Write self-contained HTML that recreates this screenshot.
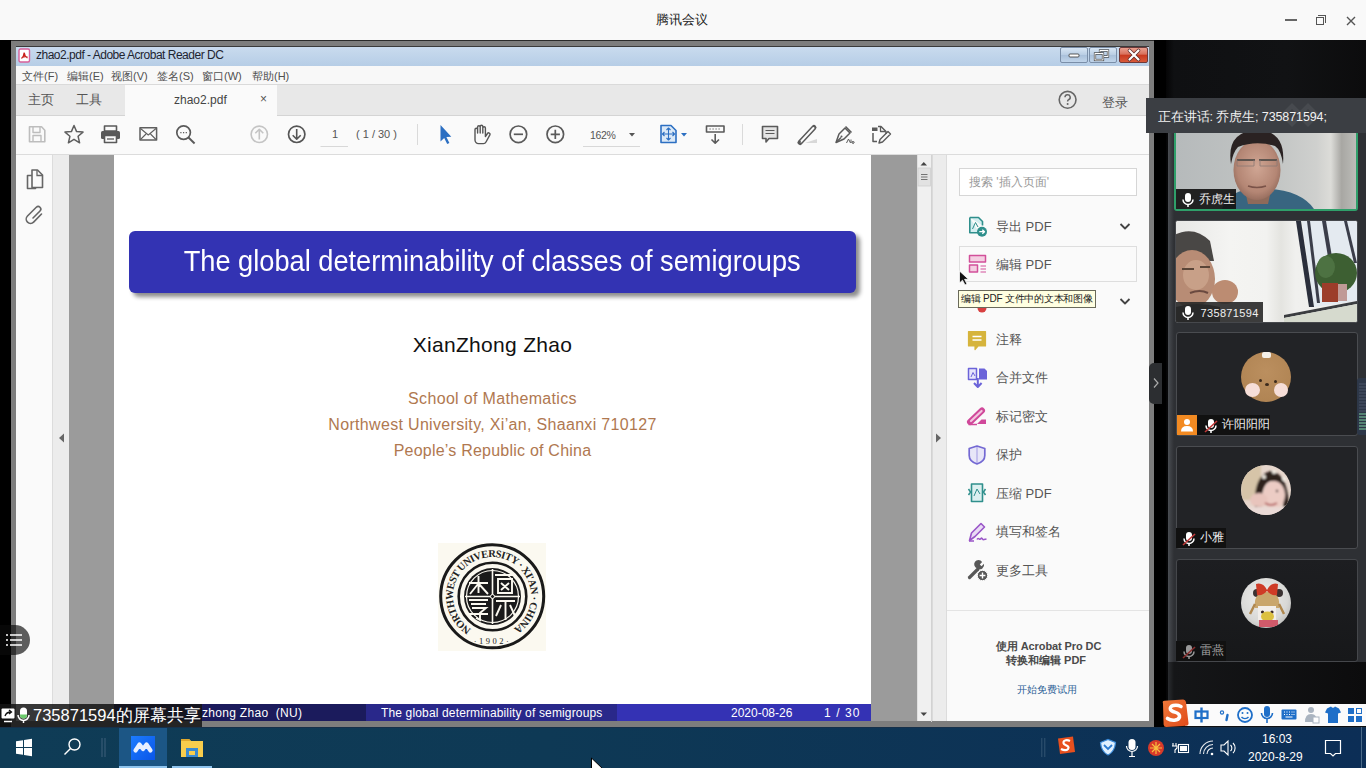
<!DOCTYPE html>
<html><head><meta charset="utf-8">
<style>
*{margin:0;padding:0;box-sizing:border-box}
html,body{width:1366px;height:768px;overflow:hidden;background:#000;font-family:"Liberation Sans",sans-serif;position:relative}
.a{position:absolute}
.t{position:absolute;white-space:nowrap;line-height:1}
</style></head><body>

<!-- Tencent meeting top bar -->
<div class="a" style="left:0;top:0;width:1366px;height:40px;background:#f9f9f9"></div>
<div class="t" style="left:656px;top:13px;font-size:13px;color:#222">腾讯会议</div>
<div class="a" style="left:1285px;top:19px;width:12px;height:2px;background:#666"></div>
<div class="a" style="left:1316px;top:17px;width:8px;height:8px;border:1.5px solid #555"></div>
<div class="a" style="left:1318px;top:15px;width:8px;height:8px;border-top:1.5px solid #555;border-right:1.5px solid #555"></div>
<svg class="a" style="left:1346px;top:16px" width="10" height="10"><path d="M1 1L9 9M9 1L1 9" stroke="#555" stroke-width="1.4"/></svg>

<!-- Acrobat window frame -->
<div class="a" style="left:11px;top:40px;width:1143px;height:687px;background:#7d7d7d;border-top:1px solid #2a2a2a"></div>
<!-- title bar -->
<div class="a" style="left:16px;top:46px;width:1133px;height:20px;background:linear-gradient(#c9dbee,#b6cde6);border-top:1px solid #3a3a3a"></div>
<svg class="a" style="left:18px;top:48px" width="13" height="15"><rect x="1" y="1" width="10.5" height="13" rx="1.5" fill="#fff" stroke="#d8609a" stroke-width="1.4"/><path d="M3.5 10.5C5 9 6 7 6.2 4.5C6.5 7 7.5 9 9.5 10M4 9.5C6 8.5 8 8.5 9.5 9" stroke="#c8201a" stroke-width="1.2" fill="none"/></svg>
<div class="a" style="left:1060px;top:47px;width:28px;height:16px;border:1px solid #7a8ea8;border-radius:2px;background:linear-gradient(#d8e6f4,#b8cde4 50%,#a9c0da 51%,#c0d4ea)"></div>
<div class="a" style="left:1089px;top:47px;width:28px;height:16px;border:1px solid #7a8ea8;border-radius:2px;background:linear-gradient(#d8e6f4,#b8cde4 50%,#a9c0da 51%,#c0d4ea)"></div>
<div class="a" style="left:1119px;top:47px;width:29px;height:16px;border:1px solid #6e3a3a;border-radius:2px;background:linear-gradient(#eaa090,#d8705a 45%,#c8381e 50%,#d85a3a)"></div>
<svg class="a" style="left:1060px;top:47px" width="90" height="16">
 <rect x="9" y="7" width="10" height="3" rx="1" fill="#fff" stroke="#333" stroke-width="0.8"/>
 <rect x="40" y="3.5" width="8" height="6" fill="none" stroke="#333" stroke-width="2.2"/>
 <rect x="40" y="3.5" width="8" height="6" fill="none" stroke="#fff" stroke-width="1"/>
 <rect x="35" y="6.5" width="8" height="6.5" fill="#b8cde4" stroke="#333" stroke-width="2.2"/>
 <rect x="35" y="6.5" width="8" height="6.5" fill="none" stroke="#fff" stroke-width="1"/>
 <path d="M69.5 3.5L78.5 12.5M78.5 3.5L69.5 12.5" stroke="#5a2a2a" stroke-width="3.6" stroke-linecap="round"/>
 <path d="M69.5 3.5L78.5 12.5M78.5 3.5L69.5 12.5" stroke="#fff" stroke-width="2.2" stroke-linecap="round"/>
</svg>
<div class="t" style="left:36px;top:49px;font-size:12px;letter-spacing:-0.5px;color:#1e2430">zhao2.pdf - Adobe Acrobat Reader DC</div>
<!-- menu bar -->
<div class="a" style="left:16px;top:66px;width:1133px;height:19px;background:#f8f8f8;border-bottom:1px solid #dadada"></div>
<div class="t" style="left:22px;top:70.5px;font-size:11px;color:#505050">文件(F)</div>
<div class="t" style="left:67px;top:70.5px;font-size:11px;color:#505050">编辑(E)</div>
<div class="t" style="left:111px;top:70.5px;font-size:11px;color:#505050">视图(V)</div>
<div class="t" style="left:157px;top:70.5px;font-size:11px;color:#505050">签名(S)</div>
<div class="t" style="left:202px;top:70.5px;font-size:11px;color:#505050">窗口(W)</div>
<div class="t" style="left:252px;top:70.5px;font-size:11px;color:#505050">帮助(H)</div>
<!-- tab bar -->
<div class="a" style="left:16px;top:85px;width:1133px;height:31px;background:#e8e8e8;border-bottom:1px solid #d4d4d4"></div>
<div class="a" style="left:125px;top:85px;width:152px;height:31px;background:#fafafa"></div>
<div class="t" style="left:28px;top:93px;font-size:13px;color:#555">主页</div>
<div class="t" style="left:76px;top:93px;font-size:13px;color:#555">工具</div>
<div class="t" style="left:174px;top:94px;font-size:12px;color:#444">zhao2.pdf</div>
<div class="t" style="left:260px;top:93px;font-size:12px;color:#555">×</div>
<svg class="a" style="left:1057px;top:89px" width="22" height="22"><circle cx="10.6" cy="10.8" r="8.4" fill="none" stroke="#666" stroke-width="1.6"/><path d="M8 8.3a2.6 2.6 0 1 1 3.6 2.4c-0.8 0.4 -1 0.9 -1 1.8" fill="none" stroke="#666" stroke-width="1.5"/><circle cx="10.6" cy="15" r="1" fill="#666"/></svg>
<div class="t" style="left:1101.5px;top:95.5px;font-size:13px;color:#555">登录</div>
<!-- toolbar -->
<div class="a" style="left:16px;top:116px;width:1133px;height:39px;background:#fafafa;border-bottom:1px solid #dcdcdc"></div>


<!-- toolbar icons -->
<svg class="a" style="left:0;top:0" width="1366" height="160" fill="none" stroke-linejoin="round">
 <!-- save -->
 <path d="M29.5 126.8H41.5L44.8 130.2V141.7H29.5Z" stroke="#bdbdbd" stroke-width="1.6"/>
 <path d="M33 127V132.5H40V127" stroke="#bdbdbd" stroke-width="1.4"/>
 <path d="M33 141.5V135.5H41V141.5" stroke="#bdbdbd" stroke-width="1.4"/>
 <!-- star -->
 <path d="M74 125.5L76.6 131.6L83 132.1L78.1 136.3L79.6 142.8L74 139.3L68.4 142.8L69.9 136.3L65 132.1L71.4 131.6Z" stroke="#5f5f5f" stroke-width="1.5"/>
 <!-- printer -->
 <rect x="104.5" y="126" width="12" height="5" stroke="#5a5a5a" stroke-width="1.6"/>
 <rect x="101" y="131" width="19" height="8" rx="1.5" fill="#5a5a5a"/>
 <rect x="104.5" y="135.5" width="12" height="7" fill="#fafafa" stroke="#5a5a5a" stroke-width="1.6"/>
 <path d="M107 139H114" stroke="#5a5a5a" stroke-width="1.3"/>
 <!-- mail -->
 <rect x="140" y="127.7" width="16.6" height="12.4" stroke="#5f5f5f" stroke-width="1.5"/>
 <path d="M140.5 128.5L148.3 135L156 128.5M140.5 139.5L146 134M156 139.5L150.5 134" stroke="#5f5f5f" stroke-width="1.1"/>
 <!-- zoom -->
 <circle cx="183.6" cy="132.6" r="6.8" stroke="#5a5a5a" stroke-width="1.7"/>
 <path d="M188.5 137.5L194.6 143.5" stroke="#5a5a5a" stroke-width="1.9"/>
 <path d="M180.3 132.6h1.2M183 132.6h1.2M185.7 132.6h1.2" stroke="#5a5a5a" stroke-width="1.3"/>
 <!-- up circle -->
 <circle cx="259.3" cy="134.3" r="8.2" stroke="#c4c4c4" stroke-width="1.6"/>
 <path d="M259.3 139.5V129.5M255.3 133.3L259.3 129.3L263.3 133.3" stroke="#c4c4c4" stroke-width="1.6"/>
 <!-- down circle -->
 <circle cx="296.7" cy="134.3" r="8.2" stroke="#555" stroke-width="1.7"/>
 <path d="M296.7 129V139M292.7 135.2L296.7 139.2L300.7 135.2" stroke="#555" stroke-width="1.6"/>
 <!-- page underline -->
 <path d="M320.5 146.5H348" stroke="#d8d8d8" stroke-width="1"/>
 <!-- separator -->
 <path d="M417.5 124V145" stroke="#dadada" stroke-width="1"/>
 <!-- select arrow -->
 <path d="M440.5 125V141.5L444.2 138L447.2 144L449.4 143L446.4 137L451.3 136.8Z" fill="#2c6fc2"/>
 <!-- hand -->
 <path d="M475 135.5V129.5a1.3 1.3 0 0 1 2.6 0V133V127a1.3 1.3 0 0 1 2.6 0V133V126.5a1.3 1.3 0 0 1 2.6 0V133V128a1.3 1.3 0 0 1 2.6 0V136.5L487.5 133.5a1.4 1.4 0 0 1 2.5 1.2L486 142a3 3 0 0 1 -2.6 1.6H478.5a3.5 3.5 0 0 1 -3.5 -3.5Z" stroke="#555" stroke-width="1.4"/>
 <!-- minus -->
 <circle cx="518.4" cy="134.3" r="8.3" stroke="#5a5a5a" stroke-width="1.7"/>
 <path d="M513.8 134.3H523" stroke="#5a5a5a" stroke-width="1.7"/>
 <!-- plus -->
 <circle cx="555.3" cy="134.3" r="8.3" stroke="#5a5a5a" stroke-width="1.7"/>
 <path d="M550.7 134.3H559.9M555.3 129.7V138.9" stroke="#5a5a5a" stroke-width="1.7"/>
 <!-- zoom underline + triangle -->
 <path d="M583 146.5H640" stroke="#d8d8d8" stroke-width="1"/>
 <path d="M629 133H635L632 136.5Z" fill="#555"/>
 <!-- blue page icon -->
 <path d="M661 125.5H671L676 130.5V142.5H661Z" fill="#dbe9f7" stroke="#2c6fc2" stroke-width="1.6"/>
 <path d="M668.5 128V140M662.5 134H674.5M666.5 130L668.5 128L670.5 130M666.5 138L668.5 140L670.5 138M664.5 132L662.5 134L664.5 136M672.5 132L674.5 134L672.5 136" stroke="#2c6fc2" stroke-width="1.1"/>
 <path d="M681 133H687L684 136.5Z" fill="#2c6fc2"/>
 <!-- keyboard down -->
 <rect x="706.5" y="126" width="17.5" height="6" stroke="#5a5a5a" stroke-width="1.6"/>
 <path d="M709.5 129h1.2M712.5 129h1.2M715.5 129h1.2M718.5 129h1.2" stroke="#5a5a5a" stroke-width="1.2"/>
 <path d="M715.2 134V143M711.5 139.5L715.2 143.2L719 139.5" stroke="#5a5a5a" stroke-width="1.6"/>
 <!-- separator -->
 <path d="M742.5 124V145" stroke="#dadada" stroke-width="1"/>
 <!-- comment -->
 <path d="M762.5 126.5H777.5V138.5H769L766 142V138.5H762.5Z" fill="#e4e4e4" stroke="#5a5a5a" stroke-width="1.6"/>
 <path d="M765.5 130.5H774.5M765.5 133.5H774.5" stroke="#5a5a5a" stroke-width="1.2"/>
 <!-- highlighter -->
 <path d="M800 142.5L814 127.5" stroke="#5a5a5a" stroke-width="5" stroke-linecap="round"/>
 <path d="M801 141.5L813.5 128" stroke="#fafafa" stroke-width="2" stroke-linecap="round"/>
 <path d="M805 143H817V139Z" fill="#d8d8d8"/>
 <path d="M798 143.5L800.5 141" stroke="#5a5a5a" stroke-width="1.6"/>
 <!-- pen sign -->
 <path d="M836 142.5L839 134L845 128L850 133L844 139Z" stroke="#5a5a5a" stroke-width="1.5"/>
 <path d="M836.5 142L841 137.5M845.5 126.5L851.5 132.5" stroke="#5a5a5a" stroke-width="1.5"/>
 <circle cx="841.5" cy="136.5" r="1" fill="#5a5a5a"/>
 <path d="M846.5 143L848.5 139L850.5 143M851 143V139.5M853 141.5a1 1 0 1 0 0.1 0" stroke="#5a5a5a" stroke-width="1"/>
 <!-- edit doc -->
 <path d="M872 127.5H877.5V131H872Z" fill="#5a5a5a"/>
 <path d="M878 126.5H881L886 131.5V134" stroke="#5a5a5a" stroke-width="1.5"/>
 <path d="M880.5 126.5V131.5H885.5" stroke="#5a5a5a" stroke-width="1.3"/>
 <path d="M873 133V141.5H877" stroke="#5a5a5a" stroke-width="1.5"/>
 <path d="M879 143L880 139.5L888 131.5L890.5 134L882.5 142Z" stroke="#5a5a5a" stroke-width="1.4"/>
</svg>
<div class="t" style="left:332px;top:129px;font-size:11px;color:#555">1</div>
<div class="t" style="left:356px;top:129px;font-size:11px;color:#555">( 1 / 30 )</div>
<div class="t" style="left:590px;top:129.5px;font-size:10.5px;letter-spacing:-0.3px;color:#555">162%</div>

<!-- content area -->
<div class="a" style="left:16px;top:155px;width:37px;height:566px;background:#fafafa;border-right:1px solid #dcdcdc"></div>
<div class="a" style="left:53px;top:155px;width:16px;height:566px;background:#ececec"></div>
<div class="a" style="left:69px;top:155px;width:848px;height:566px;background:#9b9b9b"></div>
<div class="a" style="left:114px;top:155px;width:757px;height:566px;background:#fff"></div>
<div class="a" style="left:917px;top:155px;width:15px;height:566px;background:#f0f0f0;border-left:1px solid #e0e0e0"></div>
<div class="a" style="left:932px;top:155px;width:14px;height:566px;background:#ececec;border-left:1px solid #dadada"></div>
<div class="a" style="left:946px;top:155px;width:203px;height:566px;background:#fafafa;border-left:1px solid #dcdcdc"></div>


<!-- tools pane -->
<div class="a" style="left:959px;top:168px;width:178px;height:28px;background:#fff;border:1px solid #d6d6d6"></div>
<div class="t" style="left:969px;top:176px;font-size:12px;color:#9a9a9a">搜索 '插入页面'</div>
<div class="a" style="left:959px;top:246px;width:178px;height:36px;background:#fafafa;border:1px solid #dedede"></div>
<div class="t" style="left:996px;top:220px;font-size:13px;color:#555">导出 PDF</div>
<div class="t" style="left:996px;top:258px;font-size:13px;color:#555">编辑 PDF</div>
<div class="t" style="left:996px;top:295px;font-size:13px;color:#555">创建 PDF</div>
<div class="t" style="left:996px;top:333px;font-size:13px;color:#555">注释</div>
<div class="t" style="left:996px;top:371px;font-size:13px;color:#555">合并文件</div>
<div class="t" style="left:996px;top:410px;font-size:13px;color:#555">标记密文</div>
<div class="t" style="left:996px;top:448px;font-size:13px;color:#555">保护</div>
<div class="t" style="left:996px;top:487px;font-size:13px;color:#555">压缩 PDF</div>
<div class="t" style="left:996px;top:525px;font-size:13px;color:#555">填写和签名</div>
<div class="t" style="left:996px;top:564px;font-size:13px;color:#555">更多工具</div>
<svg class="a" style="left:940px;top:200px" width="210" height="400" fill="none" stroke-linejoin="round">
 <!-- chevrons -->
 <path d="M180.5 24L185 28.5L189.5 24" stroke="#444" stroke-width="1.8"/>
 <path d="M180.5 99L185 103.5L189.5 99" stroke="#444" stroke-width="1.8"/>
 <!-- export -->
 <path d="M29.8 17.5H38.5L42.5 21.5V25.5M39 32.8H29.8V17.5" fill="#d4eef0" stroke="#2f8f8c" stroke-width="1.6"/>
 <path d="M32.5 29L35.5 22.5L38 27" stroke="#2f8f8c" stroke-width="1"/>
 <circle cx="42" cy="31.7" r="5" fill="#2f8f8c"/>
 <path d="M39.3 31.7H44.3M42.3 29.7L44.5 31.7L42.3 33.7" stroke="#fff" stroke-width="1.3"/>
 <!-- edit -->
 <rect x="29.5" y="55.5" width="16" height="6.5" fill="#f4cfe2" stroke="#d2509a" stroke-width="1.5"/>
 <rect x="29.5" y="65" width="8" height="7" fill="#f4cfe2" stroke="#d2509a" stroke-width="1.5"/>
 <path d="M40.5 66H46M40.5 69H46M40.5 72H46" stroke="#d2509a" stroke-width="1"/>
 <!-- create (partly hidden) -->
 <rect x="29.5" y="93" width="16" height="14" fill="#f6d0d0" stroke="#d84040" stroke-width="1.5"/>
 <circle cx="42" cy="108" r="4.5" fill="#d84040"/>
 <!-- comment yellow -->
 <path d="M28.5 131.5H45.5V146H38L35 149.5V146H28.5Z" fill="#d6b43c" stroke="#d6b43c" stroke-width="1.2"/>
 <path d="M32.5 136.5H41.5M32.5 140H41.5" stroke="#fff" stroke-width="1.3"/>
 <!-- combine -->
 <path d="M28.5 168.5H36.5V179.5H28.5Z" fill="#e7e5fb" stroke="#6b63d9" stroke-width="1.5"/>
 <path d="M39 168.5H44.5L47 171V179.5H39Z" fill="#6b63d9"/>
 <path d="M31 177L33 172.5L35 176" stroke="#6b63d9" stroke-width="1"/>
 <path d="M37.8 178V186.5M34 183L37.8 187L41.6 183" stroke="#6b63d9" stroke-width="2"/>
 <!-- redact -->
 <path d="M30 222L42 210.5" stroke="#d0489a" stroke-width="6" stroke-linecap="round"/>
 <path d="M31 221L41.6 211" stroke="#f3c5df" stroke-width="2.2" stroke-linecap="round"/>
 <path d="M37 224H46V219.5H41.5Z" fill="#d0489a"/>
 <path d="M28.5 224.5H37" stroke="#d0489a" stroke-width="1.5"/>
 <!-- shield -->
 <path d="M37 246L44.8 248.5V255.5C44.8 259.5 41.5 262.5 37 264C32.5 262.5 29.2 259.5 29.2 255.5V248.5Z" fill="#e8e6f8" stroke="#7469d3" stroke-width="1.7"/>
 <path d="M37 246V264" stroke="#7469d3" stroke-width="0.6"/>
 <!-- compress -->
 <path d="M31.5 284H42.5V301.5H31.5Z" fill="#dcf0f0" stroke="#2f8f8c" stroke-width="1.6"/>
 <path d="M34 296L37 289L40 294" stroke="#2f8f8c" stroke-width="1"/>
 <path d="M28.5 289L30.5 292L28.5 295M45.5 289L43.5 292L45.5 295" stroke="#2f8f8c" stroke-width="1.5"/>
 <!-- fill sign -->
 <path d="M29.5 340.5L31.5 333L41 323.5L44.5 327L35 336.5Z" fill="#eadcf5" stroke="#9a56c8" stroke-width="1.6"/>
 <path d="M29 341H34M37 339.5C38.5 336.5 39.5 341 41 338.5C42 337 42.5 340.5 44 339.5L46.5 339" stroke="#9a56c8" stroke-width="1.5"/>
 <!-- more tools -->
 <path d="M29.5 377.5L38 369" stroke="#585858" stroke-width="3.2" stroke-linecap="round"/>
 <path d="M37.5 368.5a4.3 4.3 0 1 1 4.6 -6.5L39.8 364.5L41.5 366.2L44 363.8A4.3 4.3 0 0 1 37.5 368.5Z" fill="#585858"/>
 <circle cx="42.5" cy="375.5" r="5.2" fill="#585858" stroke="#fafafa" stroke-width="1"/>
 <path d="M39.6 375.5H45.4M42.5 372.6V378.4" stroke="#fff" stroke-width="1.4"/>
</svg>
<!-- tooltip -->
<div class="a" style="left:958px;top:290px;width:138px;height:18px;background:#ffffe1;border:1px solid #6a6a5a"></div>
<div class="t" style="left:961px;top:294px;font-size:10px;letter-spacing:-0.25px;color:#222">编辑 PDF 文件中的文本和图像</div>
<!-- pane bottom -->
<div class="a" style="left:947px;top:610px;width:202px;height:1px;background:#e4e4e4"></div>
<div class="t" style="left:996px;top:641px;font-size:11px;letter-spacing:-0.1px;color:#4a4a4a;font-weight:bold">使用 Acrobat Pro DC</div>
<div class="t" style="left:1006px;top:654.5px;font-size:11px;color:#4a4a4a;font-weight:bold">转换和编辑 PDF</div>
<div class="t" style="left:1017px;top:685px;font-size:10.2px;color:#2d5f96">开始免费试用</div>
<!-- cursor -->
<svg class="a" style="left:958px;top:270px" width="12" height="16"><path d="M1.5 1V13L4.5 10.2L7 15L9 14L6.6 9.3H10.5Z" fill="#111" stroke="#fff" stroke-width="0.8"/></svg>

<svg class="a" style="left:0;top:150px" width="960" height="575">
 <path d="M64 283.5V292.5L59 288Z" fill="#666"/>
 <path d="M936 283.5V292.5L941 288Z" fill="#666"/>
 <path d="M920.5 15.5L923.8 12L927 15.5Z" fill="#444"/>
 <path d="M920.5 562.5H927L923.8 566Z" fill="#444"/>
 <rect x="918" y="18" width="12.5" height="18" fill="#e2e2e2" stroke="#cfcfcf" stroke-width="0.8"/>
 <path d="M921 24.5H927.5M921 27H927.5M921 29.5H927.5" stroke="#666" stroke-width="0.9"/>
 <path d="M931.5 5V572" stroke="#d2d2d2" stroke-width="1"/>
</svg>
<!-- left nav icons -->
<svg class="a" style="left:20px;top:160px" width="30" height="70" fill="none">
 <path d="M12 10H17.5L22.5 15V27.5H12Z" stroke="#666" stroke-width="1.6" stroke-linejoin="round"/>
 <path d="M17 10V15.5H22.5" stroke="#666" stroke-width="1.3"/>
 <path d="M12 15.5H7.5V28.5H15.5V27.5" stroke="#666" stroke-width="1.6" stroke-linejoin="round"/>
 <path d="M13 58L20 51a2.6 2.6 0 0 0 -3.7 -3.7L7.5 56a4.3 4.3 0 0 0 6.1 6.1L21.5 54" stroke="#666" stroke-width="1.6" stroke-linecap="round"/>
</svg>
<!-- PDF content -->
<div class="a" style="left:129px;top:231px;width:727px;height:62px;background:#3333b3;border-radius:6px;box-shadow:4px 4px 4px rgba(0,0,0,0.45)"></div>
<div class="t" style="left:114px;top:246px;width:757px;text-align:center;font-size:30px;color:#fff"><span style="display:inline-block;transform:scaleX(0.907);transform-origin:center">The global determinability of classes of semigroups</span></div>
<div class="t" style="left:114px;top:334px;width:757px;text-align:center;font-size:21px;letter-spacing:0.3px;color:#111">XianZhong Zhao</div>
<div class="t" style="left:114px;top:391px;width:757px;text-align:center;font-size:16px;letter-spacing:0.33px;color:#b07850">School of Mathematics</div>
<div class="t" style="left:114px;top:417px;width:757px;text-align:center;font-size:16px;letter-spacing:0.32px;color:#b07850">Northwest University, Xi’an, Shaanxi 710127</div>
<div class="t" style="left:114px;top:443px;width:757px;text-align:center;font-size:16px;letter-spacing:0.22px;color:#b07850">People’s Republic of China</div>

<!-- footer -->
<div class="a" style="left:114px;top:704px;width:252px;height:17px;background:#1b1b5c"></div>
<div class="a" style="left:366px;top:704px;width:251px;height:17px;background:#29288a"></div>
<div class="a" style="left:617px;top:704px;width:254px;height:17px;background:#3432b4"></div>


<!-- logo -->
<div class="a" style="left:438px;top:543px;width:108px;height:108px;background:#fbf9f0"></div>
<svg class="a" style="left:438px;top:543px" width="108" height="108" viewBox="0 0 108 108">
 <defs><path id="ring" d="M33.3 86.1A39 39 0 1 1 74.7 86.1"/></defs>
 <circle cx="54.2" cy="53.3" r="51.5" fill="none" stroke="#1a1a1a" stroke-width="3"/>
 <circle cx="54.5" cy="53.5" r="33.8" fill="none" stroke="#1a1a1a" stroke-width="2.6"/>
 <circle cx="54.5" cy="53.5" r="28.5" fill="#1a1a1a"/>
 <circle cx="54.5" cy="53.5" r="26" fill="none" stroke="#fbf9f0" stroke-width="1.2"/>
 <path d="M54.5 26V81M27 53.5H82" stroke="#fbf9f0" stroke-width="1.6"/>
 <circle cx="54.5" cy="53.5" r="2" fill="#1a1a1a" stroke="#fbf9f0" stroke-width="1"/>
 <path d="M31 40H50M40.5 33V50M40 41L32 51M41 41L50 51M57 32H76M60 36H74V50H60ZM63 40L71 47M71 40L63 47M58 58H77M67.5 58V77M63 62L58 73M72 62L77 73M31 57H50M33 61H48M34 65H48L42 70V77L38 75M31 71H50" stroke="#fbf9f0" stroke-width="1.9" fill="none"/>
 <text font-family="Liberation Serif" font-size="10.5" font-weight="bold" fill="#222"><textPath href="#ring" textLength="200" lengthAdjust="spacing">NORTHWEST UNIVERSITY · XI'AN · CHINA</textPath></text>
 <text x="54.5" y="101" font-family="Liberation Serif" font-size="8.5" fill="#1a1a1a" text-anchor="middle" letter-spacing="2.5">·1902·</text>
</svg>
<!-- footer text -->
<div class="t" style="left:202px;top:707px;font-size:12px;color:#fff;letter-spacing:0.3px">zhong Zhao &nbsp;(NU)</div>
<div class="t" style="left:381px;top:707px;font-size:12px;letter-spacing:0.15px;color:#fff">The global determinability of semigroups</div>
<div class="t" style="left:731px;top:707px;font-size:12px;color:#fff">2020-08-26</div>
<div class="t" style="left:824px;top:707px;font-size:12px;letter-spacing:1.1px;color:#fff">1 / 30</div>

<!-- right dark panel -->
<div class="a" style="left:1154px;top:40px;width:212px;height:687px;background:#000"></div>
<div class="a" style="left:1166px;top:40px;width:200px;height:687px;background:linear-gradient(90deg,#050506,#0f1012 8px,#111214 60%,#0c0c0d)"></div>
<div class="a" style="left:1168px;top:98px;width:198px;height:567px;background:linear-gradient(90deg,#4a4d52,#2e3034 6px,#2e3034)"></div>
<div class="a" style="left:1168px;top:662px;width:198px;height:42px;background:linear-gradient(90deg,#2a2c2f,#151618 6px,#0c0c0d)"></div>
<!-- tile 1 video -->
<div class="a" style="left:1174px;top:104px;width:184px;height:107px;border:2px solid #2f9f6a;border-radius:3px;overflow:hidden;background:#c9cbcb">
<svg width="180" height="103" style="display:block">
 <defs>
  <linearGradient id="w1" x1="0" x2="1"><stop offset="0" stop-color="#b6babb"/><stop offset=".55" stop-color="#c2c5c4"/><stop offset=".78" stop-color="#cfd0ce"/><stop offset=".86" stop-color="#dcdcd8"/><stop offset=".92" stop-color="#a8a7a3"/><stop offset="1" stop-color="#bcbcb8"/></linearGradient>
  <radialGradient id="f1" cx=".5" cy=".45" r=".6"><stop offset="0" stop-color="#d0a694"/><stop offset=".7" stop-color="#b48674"/><stop offset="1" stop-color="#8e6658"/></radialGradient>
  <filter id="bl1"><feGaussianBlur stdDeviation="0.6"/></filter>
 </defs>
 <rect width="180" height="103" fill="url(#w1)"/>
 <g filter="url(#bl1)">
 <path d="M46 103Q52 84 80 82Q124 82 138 103Z" fill="#376580"/>
 <path d="M68 80H96L92 98H72Z" fill="#8e6a5a"/>
 <ellipse cx="81" cy="64" rx="23.5" ry="30" fill="url(#f1)"/>
 <path d="M55 58Q50 26 80 24Q110 24 107 58Q105 44 99 40Q80 34 62 41Q57 46 55 58Z" fill="#2a2422"/>
 <path d="M61 54H79M83 54H101" stroke="#5e5450" stroke-width="1.8"/>
 <path d="M61 54V60H78V54M84 54V60H101V54" stroke="#8a7a74" stroke-width="0.8" fill="none"/>
 <path d="M72 80Q81 83 90 80" stroke="#7a5248" stroke-width="1.5" fill="none"/>
 </g>
</svg>
</div>
<div class="a" style="left:1176px;top:189px;width:60px;height:20px;background:rgba(20,20,20,.92)"></div>
<svg class="a" style="left:1181px;top:192px" width="14" height="16"><rect x="4" y="1" width="6" height="9" rx="3" fill="#fff"/><path d="M2 7.5a5 5 0 0 0 10 0" stroke="#fff" stroke-width="1.5" fill="none"/><path d="M7 12.5V15" stroke="#fff" stroke-width="1.5"/></svg>
<div class="t" style="left:1199px;top:193px;font-size:12px;color:#f0f0f0">乔虎生</div>
<!-- tile 2 video -->
<div class="a" style="left:1175px;top:220px;width:183px;height:103px;border:1px solid #46484c;border-radius:3px;overflow:hidden;background:#eeeeec">
<svg width="181" height="101" style="display:block">
 <defs>
  <linearGradient id="w2" x1="0" x2="1"><stop offset="0" stop-color="#e8e8e6"/><stop offset=".3" stop-color="#f4f4f2"/><stop offset=".5" stop-color="#f2f2f0"/><stop offset=".58" stop-color="#e4e4e0"/><stop offset=".66" stop-color="#f0f0ee"/><stop offset="1" stop-color="#eeeeec"/></linearGradient>
  <filter id="bl2"><feGaussianBlur stdDeviation="0.6"/></filter>
 </defs>
 <rect width="181" height="101" fill="url(#w2)"/>
 <g filter="url(#bl2)">
 <path d="M126 0H181V80L138 86Z" fill="#e4eaf0"/>
 <path d="M120 0H125L138 86H133Z" fill="#2a2e3a"/>
 <path d="M131 0H134L144 82H141Z" fill="#3a3e48"/>
 <path d="M146 0H150L156 36H152Z" fill="#3a3e4a"/>
 <path d="M168 0H171L181 42H178Z" fill="#3a3e4a"/>
 <path d="M108 94L181 80V83L108 97Z" fill="#3a3c40"/>
 <path d="M108 97L181 83V101H108Z" fill="#d6dace"/>
 <ellipse cx="160" cy="52" rx="21" ry="20" fill="#3c5e32"/>
 <ellipse cx="150" cy="46" rx="9" ry="11" fill="#4e7242"/>
 <rect x="146" y="62" width="16" height="19" fill="#9c3c2c"/>
 <rect x="162" y="63" width="9" height="17" fill="#c09a96"/>
 <path d="M-2 14Q18 4 34 20L38 40H-2Z" fill="#4a4644"/>
 <ellipse cx="16" cy="58" rx="23" ry="29" fill="#b88c74"/>
 <ellipse cx="20" cy="54" rx="13" ry="15" fill="#c8a088"/>
 <path d="M6 48H18M24 46H34" stroke="#5a4438" stroke-width="2"/>
 <path d="M14 72Q24 68 32 72" stroke="#6a4a40" stroke-width="2" fill="none"/>
 <ellipse cx="49" cy="71" rx="13" ry="12" fill="#bc8c72"/>
 <path d="M0 86Q20 80 44 86V101H0Z" fill="#3a3634"/>
 </g>
</svg>
</div>
<div class="a" style="left:1176px;top:302px;width:87px;height:20px;background:rgba(40,40,40,.9)"></div>
<svg class="a" style="left:1181px;top:305px" width="14" height="16"><rect x="4" y="1" width="6" height="9" rx="3" fill="#fff"/><path d="M2 7.5a5 5 0 0 0 10 0" stroke="#fff" stroke-width="1.5" fill="none"/><path d="M7 12.5V15" stroke="#fff" stroke-width="1.5"/></svg>
<div class="t" style="left:1200.5px;top:308px;font-size:11px;letter-spacing:0.35px;color:#f0f0f0">735871594</div>
<!-- tile 3 -->
<div class="a" style="left:1176px;top:332px;width:182px;height:104px;border:1px solid #4a4c50;border-radius:3px;background:#222326"></div>
<div class="a" style="left:1241px;top:352px;width:50px;height:50px;border-radius:50%;background:radial-gradient(circle at 50% 40%,#bb8f5f,#ad8150)"></div>
<div class="a" style="left:1262px;top:352px;width:9px;height:6px;background:#f4f0ea;border-radius:2px"></div>
<div class="a" style="left:1245px;top:383px;width:15px;height:14px;border-radius:50%;background:#f6ded8"></div>
<div class="a" style="left:1274px;top:383px;width:14px;height:14px;border-radius:50%;background:#f6ded8"></div>
<div class="a" style="left:1259px;top:379px;width:3px;height:3px;border-radius:50%;background:#3b2a1c"></div>
<div class="a" style="left:1274px;top:380px;width:3px;height:3px;border-radius:50%;background:#3b2a1c"></div>
<div class="a" style="left:1265px;top:383px;width:4px;height:3px;border-radius:50%;background:#3b2a1c"></div>
<div class="a" style="left:1177px;top:415px;width:20px;height:20px;background:#f28a22"></div>
<svg class="a" style="left:1177px;top:415px" width="20" height="20"><circle cx="10" cy="7" r="3" fill="#fff"/><path d="M4 16.5Q4 11 10 11Q16 11 16 16.5Z" fill="#fff"/></svg>
<div class="a" style="left:1197px;top:415px;width:73px;height:20px;background:#111"></div>
<svg class="a" style="left:1203px;top:418px" width="16" height="16"><rect x="5" y="1" width="6" height="9" rx="3" fill="#fff"/><path d="M3 7.5a5 5 0 0 0 10 0" stroke="#fff" stroke-width="1.5" fill="none"/><path d="M8 12.5V15" stroke="#fff" stroke-width="1.5"/><path d="M2 14L14 3" stroke="#c23a3a" stroke-width="1.6"/></svg>
<div class="t" style="left:1222px;top:419px;font-size:11.5px;color:#f0f0f0">许阳阳阳</div>
<div class="a" style="left:1357px;top:378px;width:9px;height:57px;background:#2d3748;border-radius:3px 0 0 3px"></div>
<svg class="a" style="left:1359px;top:380px" width="7" height="54"><path d="M0 4H7M0 7H7M0 10H7M0 13H7M0 16H7M0 19H7M0 22H7M0 25H7M0 28H7M0 31H7" stroke="#4a5568" stroke-width="1"/><path d="M0 34H7M0 37H7M0 40H7M0 43H7M0 46H7M0 49H7" stroke="#7fd0a0" stroke-width="1.2"/></svg>
<!-- tile 4 -->
<div class="a" style="left:1176px;top:446px;width:182px;height:103px;border:1px solid #4a4c50;border-radius:3px;background:#222326"></div>
<svg class="a" style="left:1241px;top:465px" width="50" height="50">
 <defs><clipPath id="c4"><circle cx="25" cy="25" r="25"/></clipPath><filter id="b4"><feGaussianBlur stdDeviation="1"/></filter></defs>
 <g clip-path="url(#c4)">
 <rect width="50" height="50" fill="#e6d6cc"/>
 <g filter="url(#b4)">
 <rect x="0" y="0" width="20" height="35" fill="#d6c4a8"/>
 <path d="M14 42Q12 10 30 6Q46 8 48 40L42 44Q44 20 30 16Q20 18 20 44Z" fill="#2e201c"/>
 <ellipse cx="33" cy="30" rx="11" ry="14" fill="#ecccc4"/>
 <ellipse cx="18" cy="35" rx="9" ry="7" fill="#e8c4bc"/>
 <path d="M24 38Q30 42 36 38" stroke="#b86a6a" stroke-width="2" fill="none"/>
 <circle cx="36" cy="26" r="1.2" fill="#3a2a28"/>
 <rect x="0" y="42" width="50" height="10" fill="#eadad6"/>
 <circle cx="23" cy="12" r="2" fill="#f4efe6"/><circle cx="33" cy="7" r="2" fill="#f4efe6"/><circle cx="43" cy="14" r="2" fill="#f4efe6"/>
 </g>
 </g>
</svg>
<div class="a" style="left:1176px;top:528px;width:50px;height:20px;background:#111"></div>
<svg class="a" style="left:1181px;top:531px" width="16" height="16"><rect x="5" y="1" width="6" height="9" rx="3" fill="#fff"/><path d="M3 7.5a5 5 0 0 0 10 0" stroke="#fff" stroke-width="1.5" fill="none"/><path d="M8 12.5V15" stroke="#fff" stroke-width="1.5"/><path d="M2 14L14 3" stroke="#c23a3a" stroke-width="1.6"/></svg>
<div class="t" style="left:1200px;top:532px;font-size:11.5px;color:#f0f0f0">小雅</div>
<!-- tile 5 -->
<div class="a" style="left:1176px;top:559px;width:182px;height:103px;border:1px solid #45474b;border-radius:3px;background:linear-gradient(#1d1e21,#17181a)"></div>
<svg class="a" style="left:1241px;top:578px" width="50" height="50">
 <defs><clipPath id="c5"><circle cx="25" cy="25" r="25"/></clipPath><filter id="b5"><feGaussianBlur stdDeviation="0.7"/></filter><radialGradient id="g5" cx=".45" cy=".4" r=".6"><stop offset="0" stop-color="#f0f0ee"/><stop offset=".8" stop-color="#d8d8d6"/><stop offset="1" stop-color="#c4c4c2"/></radialGradient></defs>
 <g clip-path="url(#c5)">
 <rect width="50" height="50" fill="url(#g5)"/>
 <g filter="url(#b5)">
 <circle cx="16" cy="15" r="4" fill="#3a3232"/><circle cx="38" cy="15" r="4" fill="#3a3232"/>
 <path d="M14 30Q12 14 26 14Q40 14 38 30Z" fill="#c9a66c"/>
 <path d="M14 26L9 36M38 26L43 36" stroke="#b08850" stroke-width="2.5"/>
 <path d="M15 6Q22 4 26 12Q30 4 37 6L36 17Q30 18 26 13Q22 18 16 17Z" fill="#cf3a26"/>
 <path d="M17 28H35V42H17Z" fill="#f2eeea"/>
 <circle cx="21.5" cy="34" r="1.6" fill="#3a2a28"/><circle cx="31" cy="34" r="1.6" fill="#3a2a28"/>
 <ellipse cx="26.5" cy="38.5" rx="6.5" ry="5" fill="#dcc040"/>
 <rect x="18" y="42" width="19" height="7" fill="#d05a6a"/>
 </g>
 </g>
</svg>
<div class="a" style="left:1176px;top:641px;width:50px;height:20px;background:#111"></div>
<svg class="a" style="left:1181px;top:644px" width="16" height="16"><rect x="5" y="1" width="6" height="9" rx="3" fill="#999"/><path d="M3 7.5a5 5 0 0 0 10 0" stroke="#999" stroke-width="1.5" fill="none"/><path d="M8 12.5V15" stroke="#999" stroke-width="1.5"/><path d="M2 14L14 3" stroke="#8a2e2e" stroke-width="1.6"/></svg>
<div class="t" style="left:1200px;top:645px;font-size:11.5px;color:#a8a8a8">雷燕</div>
<!-- speaking banner -->
<div class="a" style="left:1146px;top:98px;width:220px;height:35px;background:#3b3e43"></div>
<svg class="a" style="left:1275px;top:100px" width="50" height="32"><path d="M17 3L29 15L17 27L5 15Z" fill="#474a4f"/><path d="M33 3L45 15L33 27L21 15Z" fill="#474a4f"/><path d="M17 9L23 15L17 21L11 15ZM33 9L39 15L33 21L27 15Z" fill="#3b3e43"/></svg>
<div class="t" style="left:1158px;top:111px;font-size:12.5px;letter-spacing:-0.1px;color:#f2f2f2">正在讲话: 乔虎生; 735871594;</div>
<!-- collapse tab -->
<div class="a" style="left:1149px;top:363px;width:13px;height:41px;background:#2c2e31;border-radius:5px 0 0 5px"></div>
<svg class="a" style="left:1152px;top:377px" width="8" height="12"><path d="M2 1.5L6 6L2 10.5" stroke="#aaa" stroke-width="1.2" fill="none"/></svg>

<!-- taskbar -->
<div class="a" style="left:0;top:727px;width:1366px;height:41px;background:linear-gradient(90deg,#0f3c56,#0e3955 40%,#0c2e56);border-top:1px solid #16304a"></div>
<svg class="a" style="left:0;top:727px" width="1366" height="41">
 <!-- windows logo -->
 <path d="M16 14.2L23 13.2V20H16ZM24 13L32 11.8V20H24ZM16 21H23V27.8L16 26.8ZM24 21H32V29.2L24 28Z" fill="#fff"/>
 <!-- search -->
 <circle cx="74.5" cy="17.5" r="5.5" fill="none" stroke="#fff" stroke-width="1.4"/>
 <path d="M70.5 21.5L64.5 27.5" stroke="#fff" stroke-width="1.5"/>
 <path d="M102 11V30M105 11V30" stroke="#4d6a85" stroke-width="0.8"/>
 <!-- active app -->
 <rect x="119" y="1" width="48" height="40" fill="#1c5685"/>
 <rect x="119" y="39" width="48" height="2" fill="#8fc4ee"/>
 <rect x="131" y="9" width="24" height="24" fill="url(#tm)"/>
 <path d="M135.5 23.5L139.5 17.5L143 22L146.5 17.5L150.5 23.5" stroke="#e8f0ff" stroke-width="4.2" stroke-linejoin="round" stroke-linecap="round" fill="none"/>
 <!-- explorer -->
 <path d="M181 12H189L191 14H203V30H181Z" fill="#f8cd4c"/>
 <path d="M181 12H189L191 14H181Z" fill="#e0a82c"/>
 <rect x="186" y="21" width="12" height="9" fill="#3a8ad0"/>
 <rect x="189" y="24" width="6" height="4" fill="#f8cd4c"/>
 <rect x="172" y="39" width="40" height="2" fill="#8fc4ee"/>
 <defs><linearGradient id="tm" x1="0" y1="0" x2="1" y2="1"><stop offset="0" stop-color="#1c7cff"/><stop offset="1" stop-color="#0a55e8"/></linearGradient></defs>
 <!-- tray -->
 <path d="M1041.8 11V30M1044.8 11V30" stroke="#3e5d7a" stroke-width="0.8"/>
 <path d="M1058 11.5L1073 9.5L1075 25L1060 27Z" fill="#e8501e"/>
 <path d="M1070 14C1066 12 1062 14 1064 17C1066 19 1070 19 1068 22C1066 24 1063 23 1061 22" stroke="#fff" stroke-width="2.2" fill="none"/>
 <path d="M1100.5 15.5L1108 12.5L1115.5 15.5C1115 22 1112 26 1108 28C1104 26 1101 22 1100.5 15.5Z" fill="#dff0ff" stroke="#3a8ad8" stroke-width="1.2"/>
 <path d="M1104 18L1108 22L1112 18" stroke="#2a7ad0" stroke-width="1.8" fill="none"/>
 <rect x="1128.5" y="12" width="7" height="11" rx="3.5" fill="#fff"/>
 <path d="M1126.5 19a5.5 5.5 0 0 0 11 0M1132 25V29M1129 29.5H1135" stroke="#fff" stroke-width="1.2" fill="none"/>
 <circle cx="1156" cy="21" r="8" fill="#d83a2a"/>
 <path d="M1152 17L1160 25M1160 17L1152 25M1156 15V27M1150 21H1162" stroke="#f8c040" stroke-width="1.2"/>
 <path d="M1173 16V19M1176 16V19M1172 19H1177V21L1175 23V26" stroke="#fff" stroke-width="1.1" fill="none"/>
 <rect x="1178.5" y="17.5" width="10" height="8" fill="none" stroke="#fff" stroke-width="1.1"/>
 <rect x="1180" y="19" width="7" height="5" fill="#fff"/>
 <path d="M1200 27a13 13 0 0 1 13 -13M1203.5 27a9.5 9.5 0 0 1 9.5 -9.5M1207 27a6 6 0 0 1 6 -6" stroke="#fff" stroke-width="1.1" fill="none" opacity=".9"/>
 <circle cx="1212" cy="27" r="1.3" fill="#fff"/>
 <path d="M1221 18H1224L1228 14V28L1224 24H1221Z" fill="none" stroke="#fff" stroke-width="1.1"/>
 <path d="M1230.5 18a4 4 0 0 1 0 6M1233 16a7 7 0 0 1 0 10" stroke="#fff" stroke-width="1.1" fill="none"/>
 <path d="M1325.5 13.5H1340.5V26.5H1335.5L1333 29L1330.5 26.5H1325.5Z" fill="none" stroke="#fff" stroke-width="1.2"/>
 <path d="M1361.5 0V41" stroke="#4a6a88" stroke-width="1"/>
 <!-- mouse cursor -->
 <path d="M591.5 31V48L595.5 44L598.5 50L601 49L598 43H604Z" fill="#fff" stroke="#000" stroke-width="1"/>
</svg>
<div class="t" style="left:1262px;top:733px;font-size:12px;color:#fff">16:03</div>
<div class="t" style="left:1248px;top:751px;font-size:12px;color:#fff">2020-8-29</div>
<!-- IME bar -->
<div class="a" style="left:1185px;top:704px;width:181px;height:22px;background:#fbfbfb"></div>
<svg class="a" style="left:1155px;top:696px" width="211" height="32">
 <defs><linearGradient id="sg" x1="0" y1="0" x2="1" y2="1"><stop offset="0" stop-color="#f07a3a"/><stop offset="1" stop-color="#e04a1a"/></linearGradient></defs>
 <path d="M8 7.5Q7 5 9.5 4.8L28 3.5Q30.5 3.4 31 6L33.5 27Q33.8 29.5 31 29.8L11.5 31Q9 31.2 8.6 28.5Z" fill="url(#sg)"/>
 <path d="M26 10.5C21 8 14 9.5 15.5 13.5C17 17 25.5 15.5 24.5 21C23.5 25 16 25 12.5 22.5" stroke="#fff" stroke-width="3.6" fill="none" stroke-linecap="round"/>
 <rect x="40.5" y="15.5" width="12" height="6.5" fill="none" stroke="#1f6fc8" stroke-width="2.2"/>
 <path d="M46.5 11.5V26.5" stroke="#1f6fc8" stroke-width="2.4"/>
 <circle cx="67" cy="16.5" r="1.6" fill="none" stroke="#1f6fc8" stroke-width="1.2"/>
 <path d="M72.5 19L71.5 24" stroke="#1f6fc8" stroke-width="2.4" stroke-linecap="round"/>
 <circle cx="90" cy="19" r="7" fill="none" stroke="#1f6fc8" stroke-width="1.8"/>
 <circle cx="87.5" cy="17" r="1" fill="#1f6fc8"/><circle cx="92.5" cy="17" r="1" fill="#1f6fc8"/>
 <path d="M86.5 21a4 3 0 0 0 7 0" stroke="#1f6fc8" stroke-width="1.3" fill="none"/>
 <rect x="109" y="10" width="6" height="11" rx="3" fill="#1f6fc8"/>
 <path d="M106.5 17a5.5 5.5 0 0 0 11 0M112 23V27" stroke="#1f6fc8" stroke-width="1.6" fill="none"/>
 <g transform="translate(-4.5 0)">
 <rect x="131" y="13.5" width="15" height="10" rx="1" fill="#1f6fc8"/>
 <path d="M133.5 16h1M136 16h1M138.5 16h1M141 16h1M143 16h1M133.5 18.5h1M136 18.5h1M138.5 18.5h1M141 18.5h1M143 18.5h1M135 21H142" stroke="#fff" stroke-width="1.1"/>
 </g>
 <g transform="translate(-5 0)">
 <circle cx="161" cy="14" r="3" fill="#aab4c0"/>
 <path d="M155 26Q155 18 161 18Q165 18 166 21V26Z" fill="#aab4c0"/>
 <rect x="163" y="21" width="6" height="6" fill="#fff" stroke="#aab4c0" stroke-width="1"/>
 </g>
 <path d="M172 12.5L176 10.5Q178 13 180 10.5L184 12.5L186 16.5L183 17.5V27H173V17.5L170 16.5Z" fill="#1f6fc8"/>
 <rect x="193" y="12" width="6" height="6" fill="#1f6fc8"/>
 <rect x="193" y="20" width="6" height="6" fill="#1f6fc8"/>
 <rect x="201" y="20" width="6" height="6" fill="#1f6fc8"/>
 <rect x="201.5" y="12.5" width="5" height="5" fill="none" stroke="#1f6fc8" stroke-width="1"/>
</svg>
<!-- share overlay -->
<div class="a" style="left:0;top:704px;width:202px;height:23px;background:rgba(20,20,20,.85)"></div>
<svg class="a" style="left:0;top:704px" width="32" height="23">
 <rect x="1.5" y="4.5" width="13" height="10" rx="1" fill="#fff"/>
 <path d="M5 12C6 9 8 8 11 8M9 6L11.5 8L9 10" stroke="#111" stroke-width="1.3" fill="none"/>
 <path d="M4 17.5H12" stroke="#fff" stroke-width="1.5"/>
 <rect x="20" y="3.5" width="7" height="11" rx="3.5" fill="#fff"/>
 <path d="M20 10.5H27V11a3.5 3.5 0 0 1 -7 0Z" fill="#6ccc6c"/>
 <path d="M18 11a5.5 5.5 0 0 0 11 0M23.5 16.5V19" stroke="#fff" stroke-width="1.5" fill="none"/>
</svg>
<div class="t" style="left:33px;top:707px;font-size:16.5px;color:#fff">735871594的屏幕共享</div>
<!-- floating list button -->
<div class="a" style="left:-14px;top:625px;width:44px;height:30px;border-radius:15px;background:rgba(10,10,10,.66)"></div>
<svg class="a" style="left:4px;top:631px" width="20" height="18"><path d="M6 4H18M6 9H18M6 14H18" stroke="#fff" stroke-width="1.5"/><path d="M2 4H4M2 9H4M2 14H4" stroke="#fff" stroke-width="1.5"/></svg>

</body></html>
